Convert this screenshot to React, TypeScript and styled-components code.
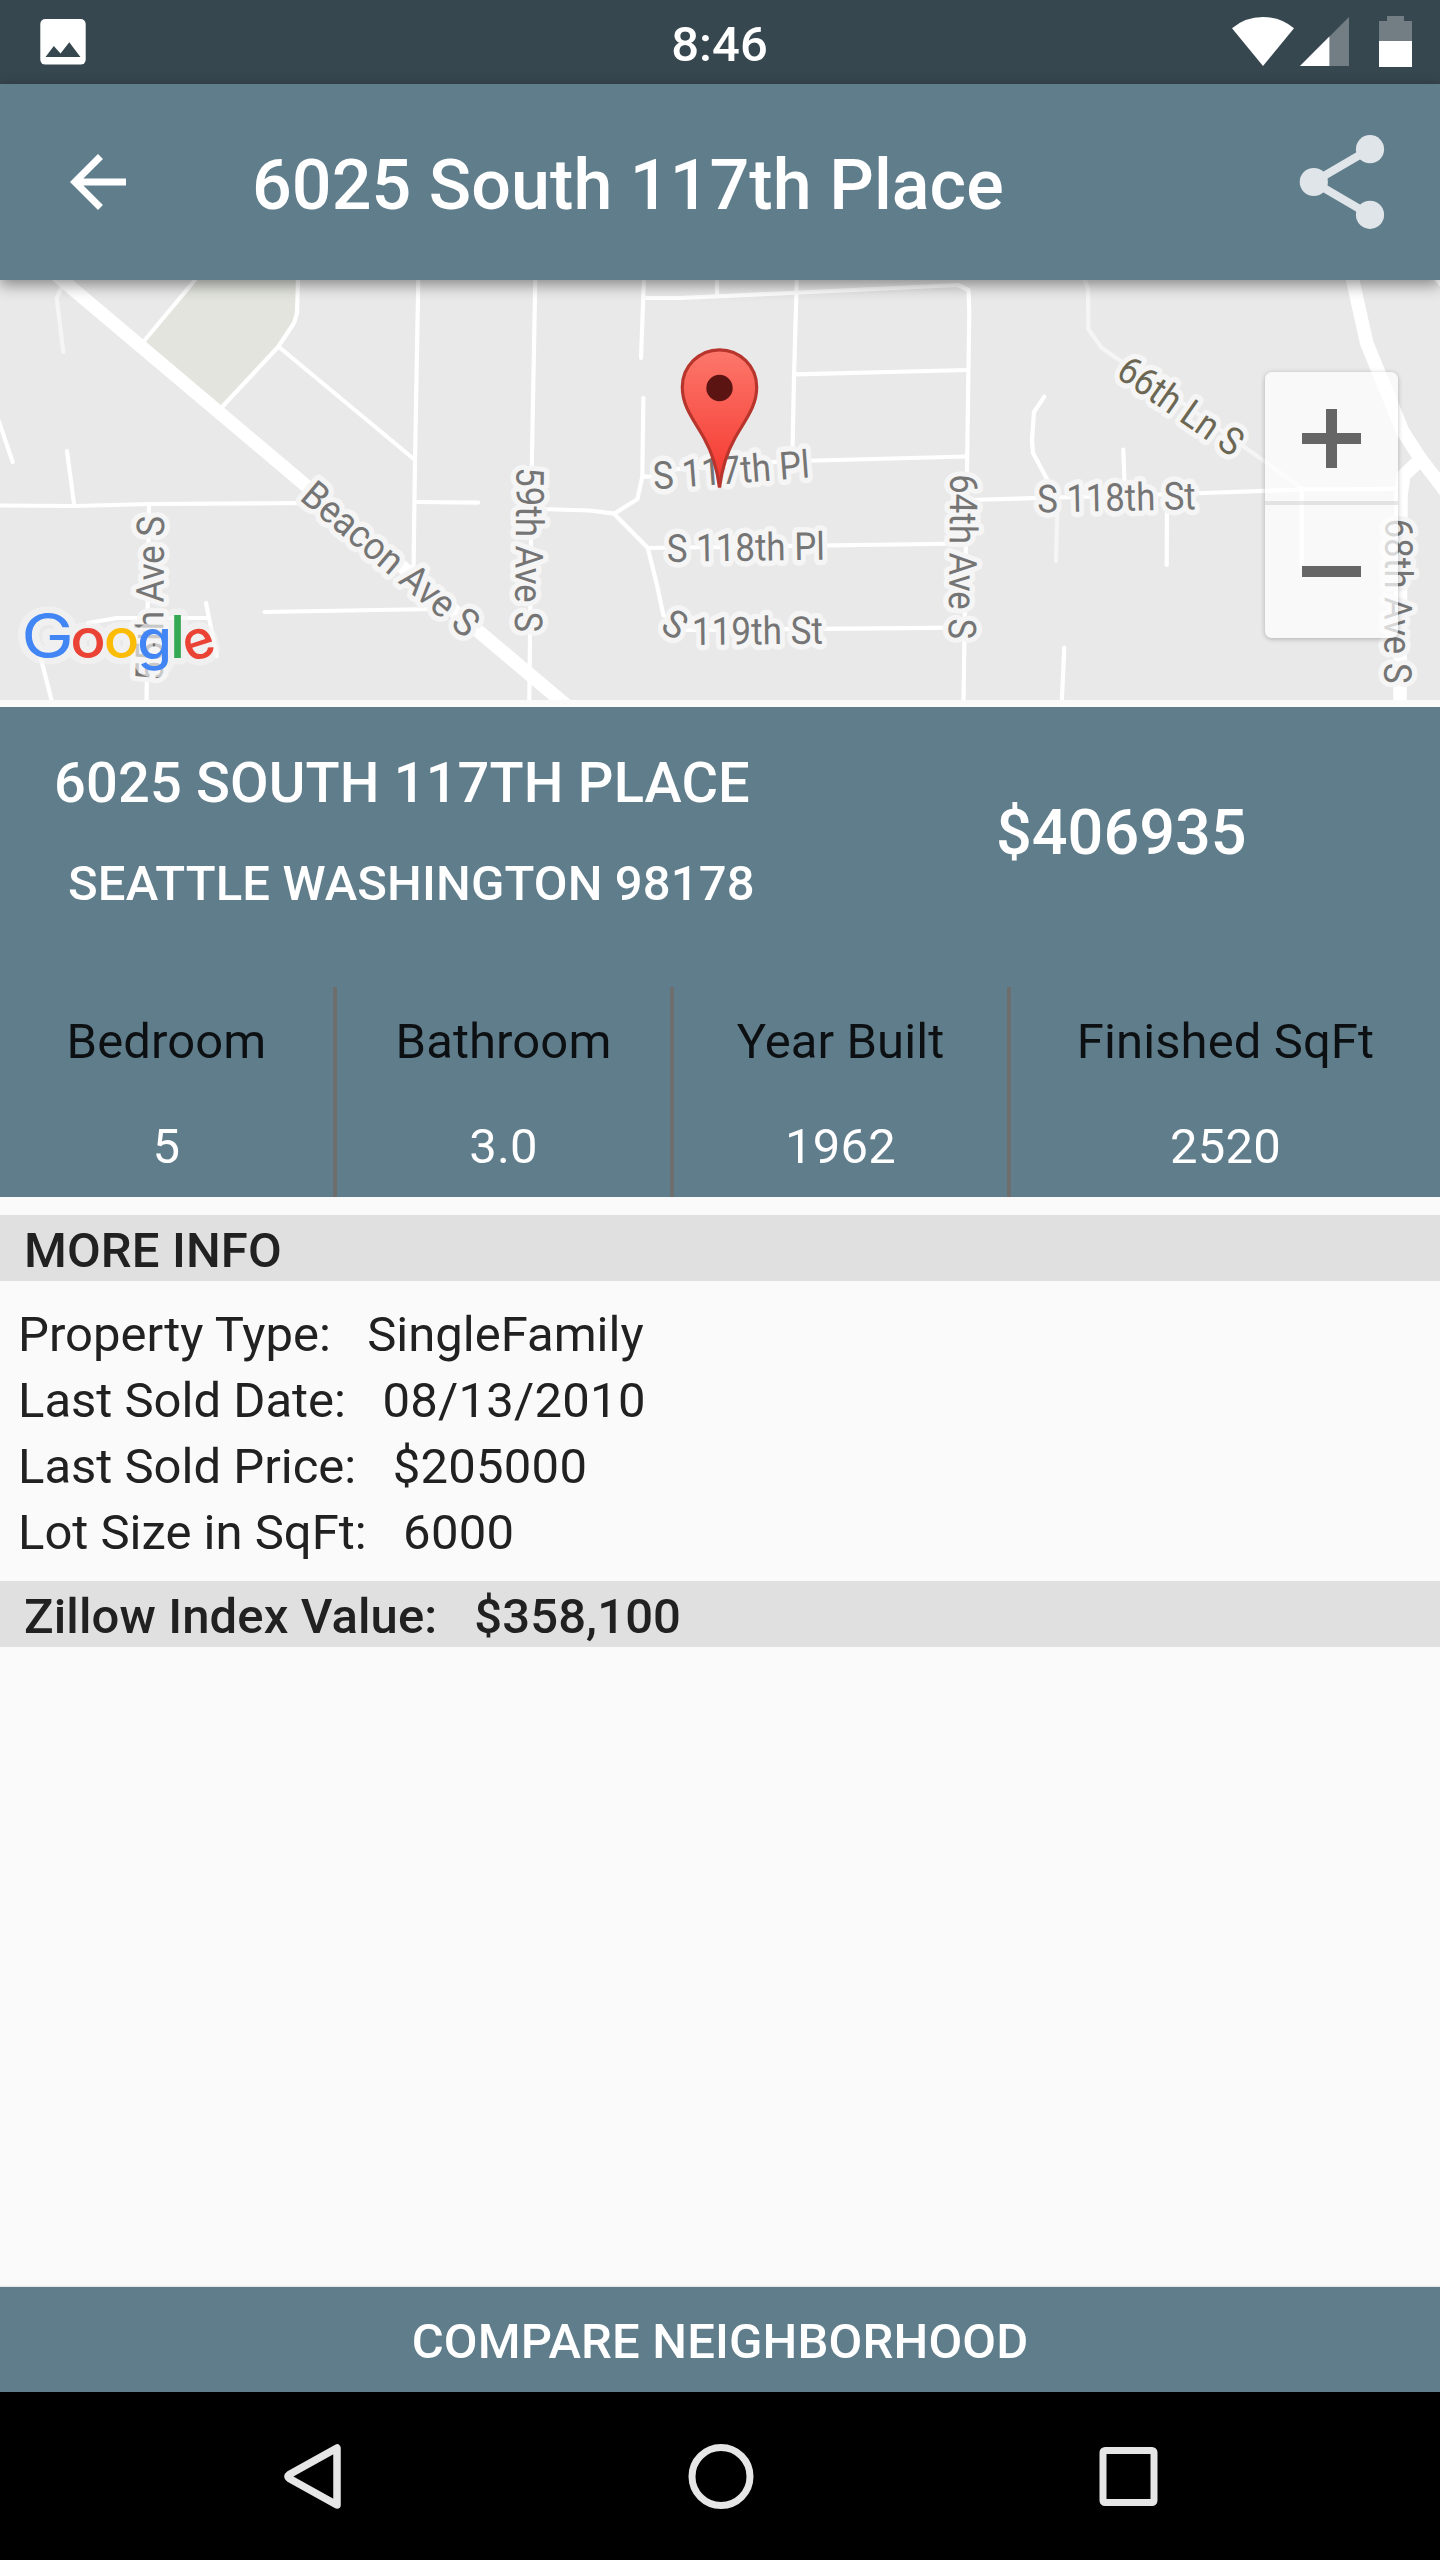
import React from "react";
import styled, { createGlobalStyle } from "styled-components";

const GlobalStyle = createGlobalStyle`
  * { box-sizing: border-box; }
  body {
    margin: 0;
    background: #fafafa;
    font-family: Roboto, "Liberation Sans", sans-serif;
    font-size: 49px;
    line-height: 66px;
  }
`;

const Screen = styled.div`
  display: flex;
  flex-direction: column;
  width: 1440px;
  height: 2560px;
  overflow: hidden;
  background: #fafafa;
`;

const StatusBar = styled.header`
  display: grid;
  grid-template-columns: 1fr auto 1fr;
  height: 84px;
  background: #37474f;
  color: #fff;
`;

const Clock = styled.time`
  padding-right: 1px;
  font-weight: 500;
  line-height: 89px;
`;

const StatusIcon = styled.svg`
  display: block;
  height: 84px;
`;

const StatusEnd = styled.div`
  display: flex;
  justify-content: flex-end;
`;

const Toolbar = styled.nav`
  display: flex;
  align-items: center;
  height: 196px;
  flex: none;
  padding: 0 42px 0 56px;
  background: #607d8b;
  color: #fff;
  box-shadow: 0 5px 14px rgba(0, 0, 0, 0.42);
  position: relative;
  z-index: 1;
`;

const ToolbarTitle = styled.h1`
  flex: 1;
  margin: 0;
  padding: 6px 0 0 112px;
  font-size: 70px;
  font-weight: 500;
  line-height: 90px;
  letter-spacing: 0.06px;
`;

const IconButton = styled.button`
  display: flex;
  padding: 0;
  border: 0;
  background: none;
  color: inherit;
`;

const MapPanel = styled.section`
  position: relative;
  height: 420px;
  flex: none;
  margin-bottom: 7px;
  background: #e9e9e9;
`;

const MapCanvas = styled.svg`
  display: block;
`;

const Label = styled.text`
  font-size: 38.5px;
  stroke: #f5f5f5;
  stroke-width: 11px;
  stroke-linejoin: round;
  paint-order: stroke;
`;

const LogoText = styled.text`
  font-family: Inter, sans-serif;
  stroke-linejoin: round;
`;

const ZoomControls = styled.div`
  position: absolute;
  top: 92px;
  right: 42px;
  width: 133px;
  display: flex;
  flex-direction: column;
  border-radius: 7px;
  overflow: hidden;
  box-shadow: 0 1px 5px rgba(0, 0, 0, 0.25);
`;

const ZoomButton = styled.button`
  display: flex;
  align-items: center;
  justify-content: center;
  height: 133px;
  padding: 0;
  border: 0;
  background: rgba(255, 255, 255, 0.72);
  &:first-child {
    border-bottom: 4px solid rgba(225, 225, 225, 0.8);
    background-clip: padding-box;
    padding-top: 4px;
  }
`;

const Summary = styled.section`
  height: 490px;
  flex: none;
  background: #607d8b;
  color: #fff;
`;

const SummaryTop = styled.div`
  display: flex;
  height: 280px;
  font-weight: 500;
  text-transform: uppercase;
`;

const Address = styled.div`
  width: 945px;
  padding: 38px 0 0 54px;
  letter-spacing: 0.14px;
`;

const Street = styled.div`
  font-size: 56px;
  line-height: 76px;
`;

const City = styled.div`
  margin: 30px 0 0 14px;
`;

const Price = styled.div`
  padding: 83px 0 0 51px;
  font-size: 63px;
  line-height: 85px;
`;

const Stats = styled.div`
  display: grid;
  grid-template-columns: 337px 337px 337px 1fr;
  height: 210px;
`;

const Stat = styled.div`
  display: flex;
  flex-direction: column;
  align-items: center;
  gap: 39px;
  padding-top: 22px;
  &:not(:last-child) {
    border-right: 4px solid #6e6e6e;
  }
`;

const StatLabel = styled.span`
  color: rgba(0, 0, 0, 0.87);
  letter-spacing: 0.1px;
`;

const StatValue = styled.span`
  letter-spacing: 0.25px;
`;

const Details = styled.section`
  flex: 1;
  padding-top: 18px;
  color: #212121;
`;

const Band = styled.div`
  height: 66px;
  padding-left: 24px;
  background: #e0e0e0;
  font-weight: 500;
  line-height: 71px;
  white-space: pre;
  letter-spacing: 0.12px;
`;

const DetailList = styled.div`
  padding: 21px 0 15px 18px;
`;

const DetailRow = styled.div`
  white-space: pre;
`;

const DetailValue = styled.span<{ $numeric: boolean }>`
  letter-spacing: ${(p) => (p.$numeric ? "0.25px" : "0")};
`;

const CompareButton = styled.button`
  height: 105px;
  flex: none;
  padding: 4px 0 0;
  border: 0;
  background: #607d8b;
  color: #fff;
  font: 500 49px/66px Roboto, sans-serif;
  letter-spacing: 0.15px;
  box-shadow: 0 0 2px rgba(0, 0, 0, 0.25);
`;

const NavBar = styled.footer`
  position: relative;
  display: flex;
  align-items: center;
  height: 168px;
  flex: none;
  padding: 0 277px 0 278px;
  justify-content: space-between;
  background: #000;
`;

type MapLabelProps = {
  x: number;
  y: number;
  angle: number;
  length: number;
  fill?: string;
  children: string;
};

const MapLabel = ({ x, y, angle, length, fill = "#757575", children }: MapLabelProps) => (
  <Label
    transform={`translate(${x} ${y}) rotate(${angle})`}
    textLength={length}
    lengthAdjust="spacingAndGlyphs"
    fill={fill}
  >
    {children}
  </Label>
);

const minorRoads = [
  "M195 280L144 341",
  "M298 280L297 313L294 323L278 347L222 407",
  "M279 347L415 460",
  "M418.3 278L415 461L413.5 570",
  "M-3 416L12.7 462",
  "M67 451L74.3 506",
  "M0 505.5L75 506L150 504L310 503",
  "M416 502L478 502.7",
  "M149 504L146.5 702",
  "M88 623L117 618L208 618",
  "M206 603L216.7 656",
  "M40 655L52 702",
  "M264.5 612L435 609",
  "M535.3 278L531.7 470L529.3 702",
  "M644 278L641 358",
  "M643.4 398L642.3 476.7L637.3 499.3L614 513.7L590 510.5L540 509",
  "M614 513.7L647.7 547.7L657 585L663.3 615L683 630L960 627.7",
  "M647.7 548L966 543.5",
  "M642 476.7L653 476.7L677 469L780 461.5L967 456.5",
  "M644 298L680 298L800 292.5L958 285L968.5 290L969.3 312L967 470L963.5 702",
  "M717 280V296",
  "M796.8 278L794 377L792.3 462",
  "M795 374.3L968 370",
  "M1044.3 396.7L1034 412L1032 440L1033 453L1048 481V498",
  "M1123.3 449.5L1125 496",
  "M1167 498L1166.7 565",
  "M1064.3 647.5L1061.8 702",
  "M968 500L1160 494.5L1301.7 489.5L1397 488.8",
  "M1301.7 489V567",
];

const faintRoads = [
  "M62 287L56.7 298L63.3 352",
  "M1085 280L1088 289L1088.3 329L1101.7 348L1190 408L1301.7 488",
  "M1057.5 502L1056 561",
];

const logoLetters = [
  { char: "G", x: 21.3, y: 658, size: 62, stretch: 1.14, tilt: 0, weight: 400, color: "#4285f4" },
  { char: "o", x: 70.2, y: 658.2, size: 54, stretch: 1.09, tilt: 0, weight: 500, color: "#ea4335" },
  { char: "o", x: 103.8, y: 658.2, size: 54, stretch: 1.09, tilt: 0, weight: 500, color: "#fbbc05" },
  { char: "g", x: 137.3, y: 658.8, size: 55, stretch: 1.02, tilt: 0, weight: 500, color: "#4285f4" },
  { char: "l", x: 169.7, y: 657.6, size: 58.4, stretch: 1.06, tilt: 0, weight: 500, color: "#34a853" },
  { char: "e", x: 188.2, y: 662.8, size: 54, stretch: 1, tilt: -18, weight: 500, color: "#ea4335" },
];

const LogoLetters = ({ halo = false }: { halo?: boolean }) => (
  <>
    {logoLetters.map((l) => (
      <LogoText
        key={l.x}
        transform={`translate(${l.x} ${l.y}) scale(${l.stretch} 1) rotate(${l.tilt})`}
        fontSize={l.size}
        fontWeight={l.weight}
        fill={halo ? "#f5f5f5" : l.color}
        stroke={halo ? "#f5f5f5" : "none"}
        strokeWidth={halo ? 13 : 0}
      >
        {l.char}
      </LogoText>
    ))}
  </>
);

const StreetMap = () => (
  <MapCanvas width="1440" height="420" viewBox="0 280 1440 420">
    <defs>
      <linearGradient id="pin" x1="0" y1="0" x2="0" y2="1">
        <stop offset="0" stopColor="#fd776b" />
        <stop offset="0.8" stopColor="#f6433a" />
        <stop offset="1" stopColor="#ea352b" />
      </linearGradient>
    </defs>
    <path d="M195 280L144 341L222 407L278 347L294 323L297 313L298 280Z" fill="#e2e4dd" />
    <g fill="none" stroke="#f5f5f5" strokeWidth="4.2" strokeLinecap="round" strokeLinejoin="round">
      {faintRoads.map((d) => <path key={d} d={d} />)}
    </g>
    <g fill="none" stroke="#fff" strokeWidth="4.2" strokeLinecap="round" strokeLinejoin="round">
      {minorRoads.map((d) => <path key={d} d={d} />)}
    </g>
    <g fill="none" stroke="#fff" strokeWidth="13.5" strokeLinejoin="round">
      <path d="M50.5 270L62.3 280L560 700L572 710" />
      <path d="M1351 270L1352.7 280L1366.7 343L1403 431.7L1420 458L1446 492" />
      <path d="M1420 460L1404 475L1401 495L1400 702" />
      <path d="M1434 276L1444 287" strokeWidth="5" />
    </g>
    <MapLabel x={298.5} y={499} angle={40} length={218}>Beacon Ave S</MapLabel>
    <MapLabel x={162.8} y={681} angle={-89.5} length={165}>55th Ave S</MapLabel>
    <MapLabel x={516.6} y={467} angle={90.6} length={165}>59th Ave S</MapLabel>
    <MapLabel x={950.3} y={474} angle={90.6} length={165}>64th Ave S</MapLabel>
    <MapLabel x={1385.5} y={518.5} angle={90.5} length={165}>68th Ave S</MapLabel>
    <MapLabel x={654} y={489.5} angle={-4.4} length={157}>S 117th Pl</MapLabel>
    <MapLabel x={667} y={562} angle={-0.9} length={158}>S 118th Pl</MapLabel>
    <MapLabel x={659} y={630} angle={32} length={21}>S</MapLabel>
    <MapLabel x={692} y={645} angle={-0.6} length={131}>119th St</MapLabel>
    <MapLabel x={1037.5} y={512.5} angle={-1.2} length={158.5}>S 118th St</MapLabel>
    <MapLabel x={1114.5} y={376} angle={34.8} length={143} fill="#6b6753">66th Ln S</MapLabel>
    <path
      d="M719.5 487.5C717 468 713 454 704 438C694 420 682.3 407 682.3 387A37.2 37.2 0 0 1 756.7 387C756.7 407 745 420 735 438C726 454 722 468 719.5 487.5Z"
      fill="url(#pin)"
      stroke="#b7352c"
      strokeWidth="3.2"
    />
    <circle cx="719.5" cy="388" r="13.2" fill="#5b1412" />
    <g opacity="0.65" aria-hidden="true">
      <LogoLetters halo />
    </g>
    <LogoLetters />
  </MapCanvas>
);

const stats = [
  ["Bedroom", "5"],
  ["Bathroom", "3.0"],
  ["Year Built", "1962"],
  ["Finished SqFt", "2520"],
];

const details = [
  { label: "Property Type:", value: "SingleFamily", numeric: false },
  { label: "Last Sold Date:", value: "08/13/2010", numeric: true },
  { label: "Last Sold Price:", value: "$205000", numeric: true },
  { label: "Lot Size in SqFt:", value: "6000", numeric: true },
];

export default function App() {
  return (
    <>
      <GlobalStyle />
      <Screen>
        <StatusBar>
          <StatusIcon width="120" viewBox="0 0 120 84">
            <rect x="40.3" y="19" width="45.4" height="45.6" rx="5" fill="#fff" />
            <path d="M45.5 57L53.8 46L60.5 53.5L69.3 42.2L80.4 57Z" fill="#37474f" />
          </StatusIcon>
          <Clock>8:46</Clock>
          <StatusEnd>
            <StatusIcon width="220" viewBox="1220 0 220 84">
              <path d="M1263 66L1232 28.3Q1245 17 1263 17T1294 28.3Z" fill="#fff" />
              <path d="M1349 17V66H1300Z" fill="#fff" fillOpacity="0.3" />
              <path d="M1329.4 36.6V66H1300Z" fill="#fff" />
              <path d="M1387 16H1404V21H1412V41H1379V21H1387Z" fill="#fff" fillOpacity="0.3" />
              <path d="M1379 41H1412V67H1379Z" fill="#fff" />
            </StatusIcon>
          </StatusEnd>
        </StatusBar>

        <Toolbar>
          <IconButton aria-label="Back">
            <svg width="84" height="84" viewBox="0 0 24 24" fill="#fff">
              <path d="M20 11H7.83l5.59-5.59L12 4l-8 8 8 8 1.41-1.41L7.83 13H20v-2z" />
            </svg>
          </IconButton>
          <ToolbarTitle>6025 South 117th Place</ToolbarTitle>
          <IconButton aria-label="Share">
            <svg width="112" height="112" viewBox="1286 126 112 112" fill="#dfe5e8">
              <path d="M1370 149L1313.5 182L1370 215" fill="none" stroke="#dfe5e8" strokeWidth="8" />
              <circle cx="1370" cy="149.2" r="14.1" />
              <circle cx="1313.8" cy="182" r="14.1" />
              <circle cx="1370" cy="214.8" r="14.1" />
            </svg>
          </IconButton>
        </Toolbar>

        <MapPanel>
          <StreetMap />
          <ZoomControls>
            <ZoomButton aria-label="Zoom in">
              <svg width="59" height="59" viewBox="0 0 59 59">
                <path d="M0 29.5H59M29.5 0V59" stroke="#666" strokeWidth="11" />
              </svg>
            </ZoomButton>
            <ZoomButton aria-label="Zoom out">
              <svg width="59" height="59" viewBox="0 0 59 59">
                <path d="M0 29.5H59" stroke="#666" strokeWidth="11" />
              </svg>
            </ZoomButton>
          </ZoomControls>
        </MapPanel>

        <Summary>
          <SummaryTop>
            <Address>
              <Street>6025 South 117th Place</Street>
              <City>Seattle Washington 98178</City>
            </Address>
            <Price>$406935</Price>
          </SummaryTop>
          <Stats>
            {stats.map(([label, value]) => (
              <Stat key={label}>
                <StatLabel>{label}</StatLabel>
                <StatValue>{value}</StatValue>
              </Stat>
            ))}
          </Stats>
        </Summary>

        <Details>
          <Band>MORE INFO</Band>
          <DetailList>
            {details.map(({ label, value, numeric }) => (
              <DetailRow key={label}>
                {`${label}   `}
                <DetailValue $numeric={numeric}>{value}</DetailValue>
              </DetailRow>
            ))}
          </DetailList>
          <Band>{"Zillow Index Value:   $358,100"}</Band>
        </Details>

        <CompareButton>COMPARE NEIGHBORHOOD</CompareButton>
        <NavBar>
          <svg width="68" height="80" viewBox="278 2436 68 80" fill="none" stroke="#e6e6e6" strokeWidth="7.5" strokeLinejoin="round">
            <path d="M337 2448V2505L289.3 2478.5Q286.5 2476.5 289.3 2474.5Z" />
          </svg>
          <svg width="80" height="80" viewBox="0 0 80 80" fill="none" stroke="#e6e6e6" strokeWidth="7">
            <circle cx="41" cy="40.5" r="29" />
          </svg>
          <svg width="70" height="80" viewBox="1093 2436 70 80" fill="none" stroke="#e6e6e6" strokeWidth="7">
            <rect x="1103" y="2450.5" width="51" height="52" rx="2" />
          </svg>
        </NavBar>
      </Screen>
    </>
  );
}
